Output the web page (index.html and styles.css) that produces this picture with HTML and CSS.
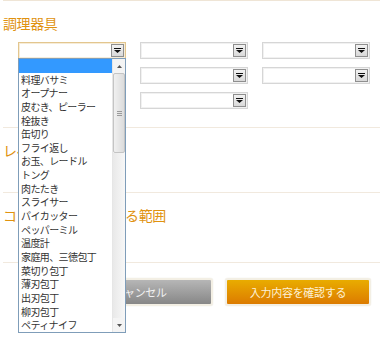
FILE: index.html
```html
<!DOCTYPE html>
<html lang="ja">
  <head>
    <meta charset="UTF-8" />
    <meta name="viewport" content="width=device-width, initial-scale=1.0" />
    <title>調理器具</title>
    <link rel="stylesheet" href="styles.css">
  </head>
  <body>
    <div class="page">
      <section class="block tools">
        <h2 class="title">調理器具</h2>
        <div class="select-grid">
          <div class="combo focus">
            <span class="combo-btn"><svg width="7" height="5" viewBox="0 0 7 5"><path d="M0 0h7v1H0z M0 2h7L3.5 5z" fill="#111"/></svg></span>
            <div class="droplist">
              <ul class="options">
                <li class="selected">&nbsp;</li>
                <li>料理バサミ</li>
                <li>オープナー</li>
                <li>皮むき、ピーラー</li>
                <li>栓抜き</li>
                <li>缶切り</li>
                <li>フライ返し</li>
                <li>お玉、レードル</li>
                <li>トング</li>
                <li>肉たたき</li>
                <li>スライサー</li>
                <li>パイカッター</li>
                <li>ペッパーミル</li>
                <li>温度計</li>
                <li>家庭用、三徳包丁</li>
                <li>菜切り包丁</li>
                <li>薄刃包丁</li>
                <li>出刃包丁</li>
                <li>柳刃包丁</li>
                <li>ペティナイフ</li>
              </ul>
              <div class="scrollbar">
                <span class="sb-arrow"><svg width="5" height="3" viewBox="0 0 5 3"><path d="M2.5 0L5 3H0z" fill="#555"/></svg></span>
                <span class="sb-thumb"><i></i><i></i><i></i></span>
                <span class="sb-track"></span>
                <span class="sb-arrow"><svg width="5" height="3" viewBox="0 0 5 3"><path d="M0 0h5L2.5 3z" fill="#555"/></svg></span>
              </div>
            </div>
          </div>
          <div class="combo"><span class="combo-btn"><svg width="7" height="5" viewBox="0 0 7 5"><path d="M0 0h7v1H0z M0 2h7L3.5 5z" fill="#111"/></svg></span></div>
          <div class="combo"><span class="combo-btn"><svg width="7" height="5" viewBox="0 0 7 5"><path d="M0 0h7v1H0z M0 2h7L3.5 5z" fill="#111"/></svg></span></div>
          <div class="combo"><span class="combo-btn"><svg width="7" height="5" viewBox="0 0 7 5"><path d="M0 0h7v1H0z M0 2h7L3.5 5z" fill="#111"/></svg></span></div>
          <div class="combo"><span class="combo-btn"><svg width="7" height="5" viewBox="0 0 7 5"><path d="M0 0h7v1H0z M0 2h7L3.5 5z" fill="#111"/></svg></span></div>
          <div class="combo"><span class="combo-btn"><svg width="7" height="5" viewBox="0 0 7 5"><path d="M0 0h7v1H0z M0 2h7L3.5 5z" fill="#111"/></svg></span></div>
          <div class="combo"><span class="combo-btn"><svg width="7" height="5" viewBox="0 0 7 5"><path d="M0 0h7v1H0z M0 2h7L3.5 5z" fill="#111"/></svg></span></div>
          <div class="combo"><span class="combo-btn"><svg width="7" height="5" viewBox="0 0 7 5"><path d="M0 0h7v1H0z M0 2h7L3.5 5z" fill="#111"/></svg></span></div>
        </div>
      </section>
      <section class="block level">
        <h2 class="title">レベル</h2>
      </section>
      <section class="block scope">
        <h2 class="title">コメントを公開できる範囲</h2>
      </section>
      <div class="actions">
        <button class="btn cancel">キャンセル</button>
        <button class="btn confirm">入力内容を確認する</button>
      </div>
    </div>
  </body>
</html>
```

FILE: styles.css
```css
html {
  min-height: 100%;
}
body {
  margin: 0;
  min-height: 337px;
  background: #fff;
  font-family: "Noto Sans CJK JP", "Noto Sans", sans-serif;
  color: #222;
}
.page {
  margin-left: 3px;
  border-top: 1px solid #efe5d6;
}
.block {
  border-bottom: 1px solid #f1e9de;
  padding-top: 12px;
}
.title {
  margin: 0;
  font-size: 14px;
  line-height: 20px;
  font-weight: normal;
  color: #e0920f;
  letter-spacing: -0.4px;
  white-space: nowrap;
}
.tools {
  padding-bottom: 18px;
}
.level {
  padding-bottom: 32px;
}
.scope {
  padding-bottom: 37px;
}
.select-grid {
  display: grid;
  grid-template-columns: repeat(3, 108px);
  grid-auto-rows: 17px;
  column-gap: 14px;
  row-gap: 8px;
  margin-top: 9px;
  padding-left: 15px;
}
.combo {
  position: relative;
  box-sizing: border-box;
  border: 1px solid #d6d6d6;
  box-shadow: inset 0 0 0 1px #f1f1f1;
  background: #fff;
  display: flex;
  justify-content: flex-end;
  align-items: center;
  padding-right: 1px;
}
.combo.focus {
  border-color: #e3c68e;
  box-shadow: inset 0 0 0 1px #f6ecd8;
}
.combo-btn {
  box-sizing: border-box;
  width: 13px;
  height: 13px;
  border: 1px solid #8f8f8f;
  background: linear-gradient(#f2f2f2, #d9d9d9);
  display: flex;
  align-items: center;
  justify-content: center;
}
.droplist {
  position: absolute;
  top: 100%;
  left: -1px;
  width: 108px;
  height: 275px;
  box-sizing: border-box;
  border: 1px solid #7f9db9;
  background: #fff;
  display: flex;
  z-index: 5;
}
.options {
  list-style: none;
  margin: 0;
  padding: 0;
  flex: 1;
}
.options li {
  height: 13.65px;
  line-height: 13.65px;
  font-size: 10px;
  letter-spacing: -0.6px;
  padding-left: 2px;
  white-space: nowrap;
  color: #333;
}
.options li.selected {
  background: #3399ff;
}
.scrollbar {
  width: 12px;
  display: flex;
  flex-direction: column;
  background: #f3f3f3;
  border-left: 1px solid #e6e6e6;
}
.sb-arrow {
  height: 14px;
  display: flex;
  align-items: center;
  justify-content: center;
  background: #f4f4f4;
}
.sb-thumb {
  height: 80px;
  box-sizing: border-box;
  border: 1px solid #c4c4c4;
  border-radius: 2px;
  background: linear-gradient(90deg, #f0f0f0, #dcdcdc);
  display: flex;
  flex-direction: column;
  align-items: center;
  justify-content: center;
  gap: 1px;
}
.sb-thumb i {
  display: block;
  width: 5px;
  height: 1px;
  background: #9a9a9a;
}
.sb-track {
  flex: 1;
  background: linear-gradient(90deg, #e9e9e9, #f7f7f7);
}
.actions {
  display: flex;
  gap: 12px;
  padding: 15px 0 40px 64px;
}
.btn {
  width: 146px;
  height: 28px;
  box-sizing: border-box;
  border: 2px solid #f3efe4;
  border-radius: 3px;
  box-shadow: 0 0 1px #d8d2c4;
  font-family: "Noto Sans CJK JP", sans-serif;
  font-size: 11px;
  color: #f2f2f2;
  letter-spacing: -0.3px;
}
.cancel {
  background: linear-gradient(#b6b6b6, #878787);
}
.confirm {
  background: linear-gradient(#e9ac00, #dc7b00);
  color: #fdf1d6;
}
```
